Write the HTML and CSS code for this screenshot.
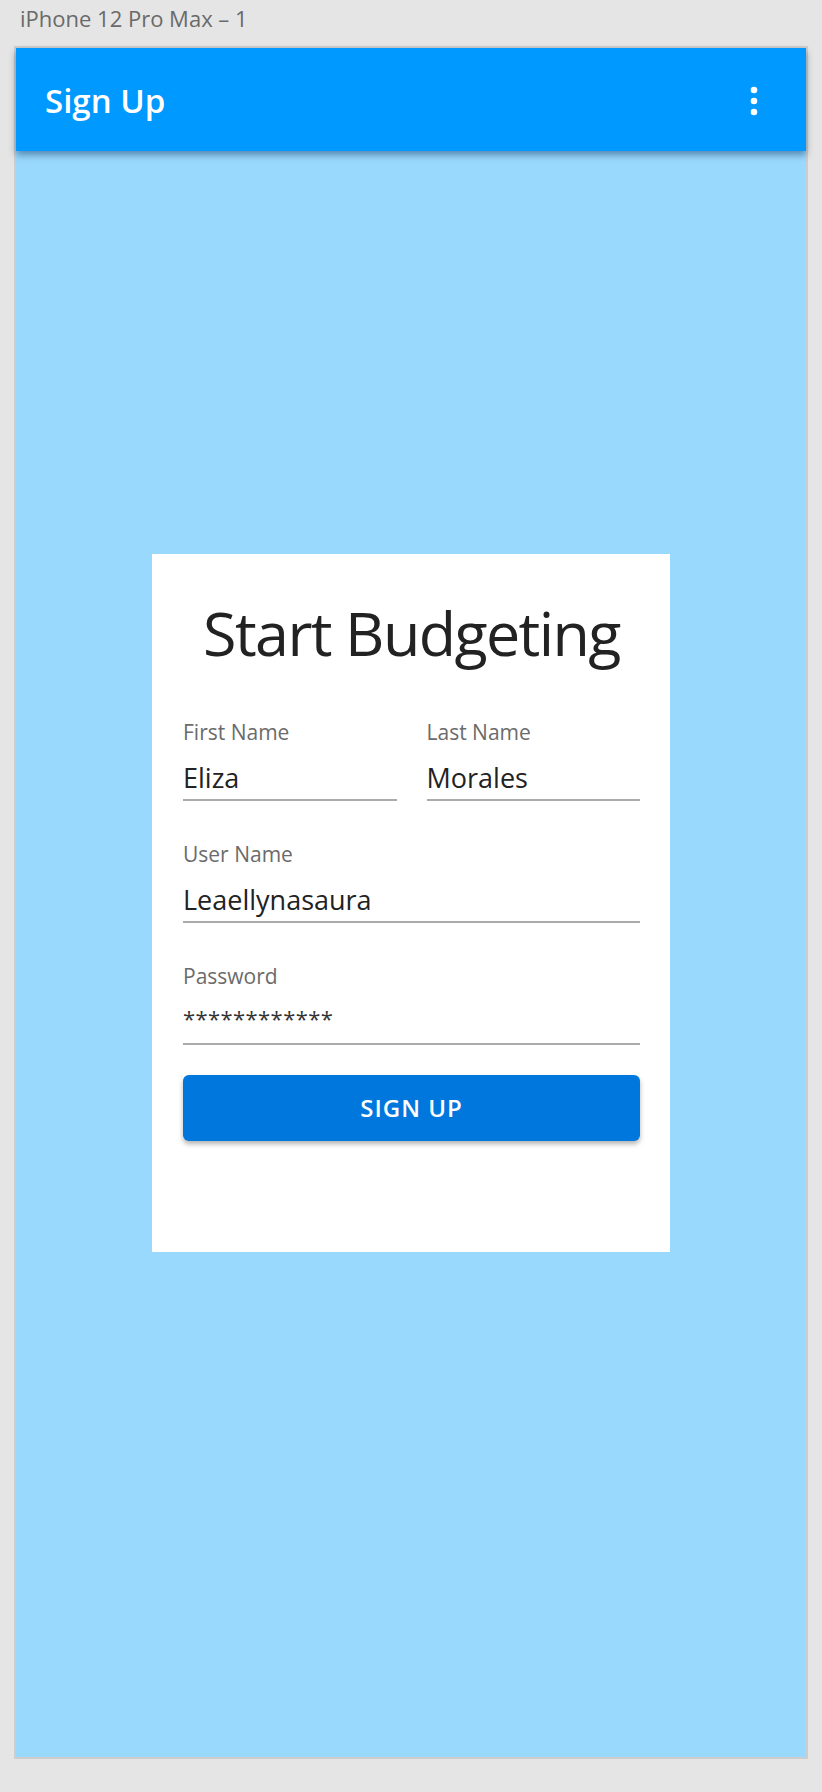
FILE: index.html
```html
<!DOCTYPE html>
<html lang="en">
<head>
<meta charset="utf-8">
<title>Sign Up</title>
<link rel="stylesheet" href="styles.css">
</head>
<body>
<div class="caption">iPhone 12 Pro Max – 1</div>
<div class="frame">
  <header class="appbar">
    <h1 class="appbar-title">Sign Up</h1>
    <svg class="menu" width="8" height="30" viewBox="0 0 8 30" aria-hidden="true">
      <circle cx="4" cy="4" r="3.3" fill="#fff"/>
      <circle cx="4" cy="15" r="3.3" fill="#fff"/>
      <circle cx="4" cy="26" r="3.3" fill="#fff"/>
    </svg>
  </header>
  <main class="stage">
    <section class="card">
      <h2 class="card-title">Start Budgeting</h2>
      <div class="row">
        <div class="field">
          <div class="label">First Name</div>
          <div class="value">Eliza</div>
        </div>
        <div class="field">
          <div class="label">Last Name</div>
          <div class="value">Morales</div>
        </div>
      </div>
      <div class="field spaced">
        <div class="label">User Name</div>
        <div class="value">Leaellynasaura</div>
      </div>
      <div class="field spaced">
        <div class="label">Password</div>
        <div class="value secret">************</div>
      </div>
      <button class="btn" type="button">SIGN UP</button>
    </section>
  </main>
</div>
</body>
</html>
```

FILE: styles.css
```css
* { box-sizing: border-box; }

html, body {
  margin: 0;
  padding: 0;
}

body {
  width: 822px;
  height: 1792px;
  background: #e5e5e5;
  font-family: "Open Sans", "Noto Sans", sans-serif;
  overflow: hidden;
}

.caption {
  height: 46px;
  padding: 3px 0 0 20px;
  font-size: 22px;
  line-height: 30px;
  font-weight: 400;
  color: #6a6a6a;
}

.frame {
  margin-left: 14px;
  width: 794px;
  height: 1713px;
  border: 2px solid #cdcdcd;
  background: #9ad9fe;
  display: flex;
  flex-direction: column;
}

.appbar {
  position: relative;
  z-index: 1;
  flex: 0 0 103px;
  height: 103px;
  background: #0099ff;
  display: flex;
  align-items: center;
  justify-content: space-between;
  padding: 2px 48px 0 29px;
  box-shadow: 0 4px 7px rgba(0, 40, 80, 0.45);
}

.appbar-title {
  margin: 0;
  font-size: 33px;
  line-height: 40px;
  font-weight: 600;
  color: #ffffff;
}

.menu {
  display: block;
}

.stage {
  flex: 1 1 auto;
  display: flex;
  align-items: center;
  justify-content: center;
  padding-bottom: 103px;
}

.card {
  width: 518px;
  height: 698px;
  background: #ffffff;
  padding: 39px 30px 0 31px;
}

.card-title {
  margin: 0 0 47px;
  text-align: center;
  font-size: 61px;
  line-height: 80px;
  font-weight: 400;
  letter-spacing: -1.6px;
  color: #222222;
}

.row {
  display: grid;
  grid-template-columns: 1fr 1fr;
  column-gap: 30px;
}

.field.spaced {
  margin-top: 41px;
}

.label {
  font-size: 21px;
  line-height: 24px;
  color: #6b6b6b;
  margin-bottom: 18px;
}

.value {
  font-size: 27px;
  line-height: 32px;
  color: #222222;
  padding-bottom: 5px;
  border-bottom: 2px solid #aaaaaa;
}

.value.secret {
  font-size: 22px;
  line-height: 24px;
  padding-bottom: 13px;
  letter-spacing: 0.4px;
  color: #333333;
}

.btn {
  display: block;
  width: 100%;
  height: 66px;
  margin-top: 30px;
  border: none;
  border-radius: 6px;
  background: #0077dd;
  color: #ffffff;
  font-family: inherit;
  font-size: 24px;
  line-height: 66px;
  font-weight: 600;
  letter-spacing: 1px;
  padding: 0;
  box-shadow: 0 3px 5px rgba(0, 0, 0, 0.3);
}
```
